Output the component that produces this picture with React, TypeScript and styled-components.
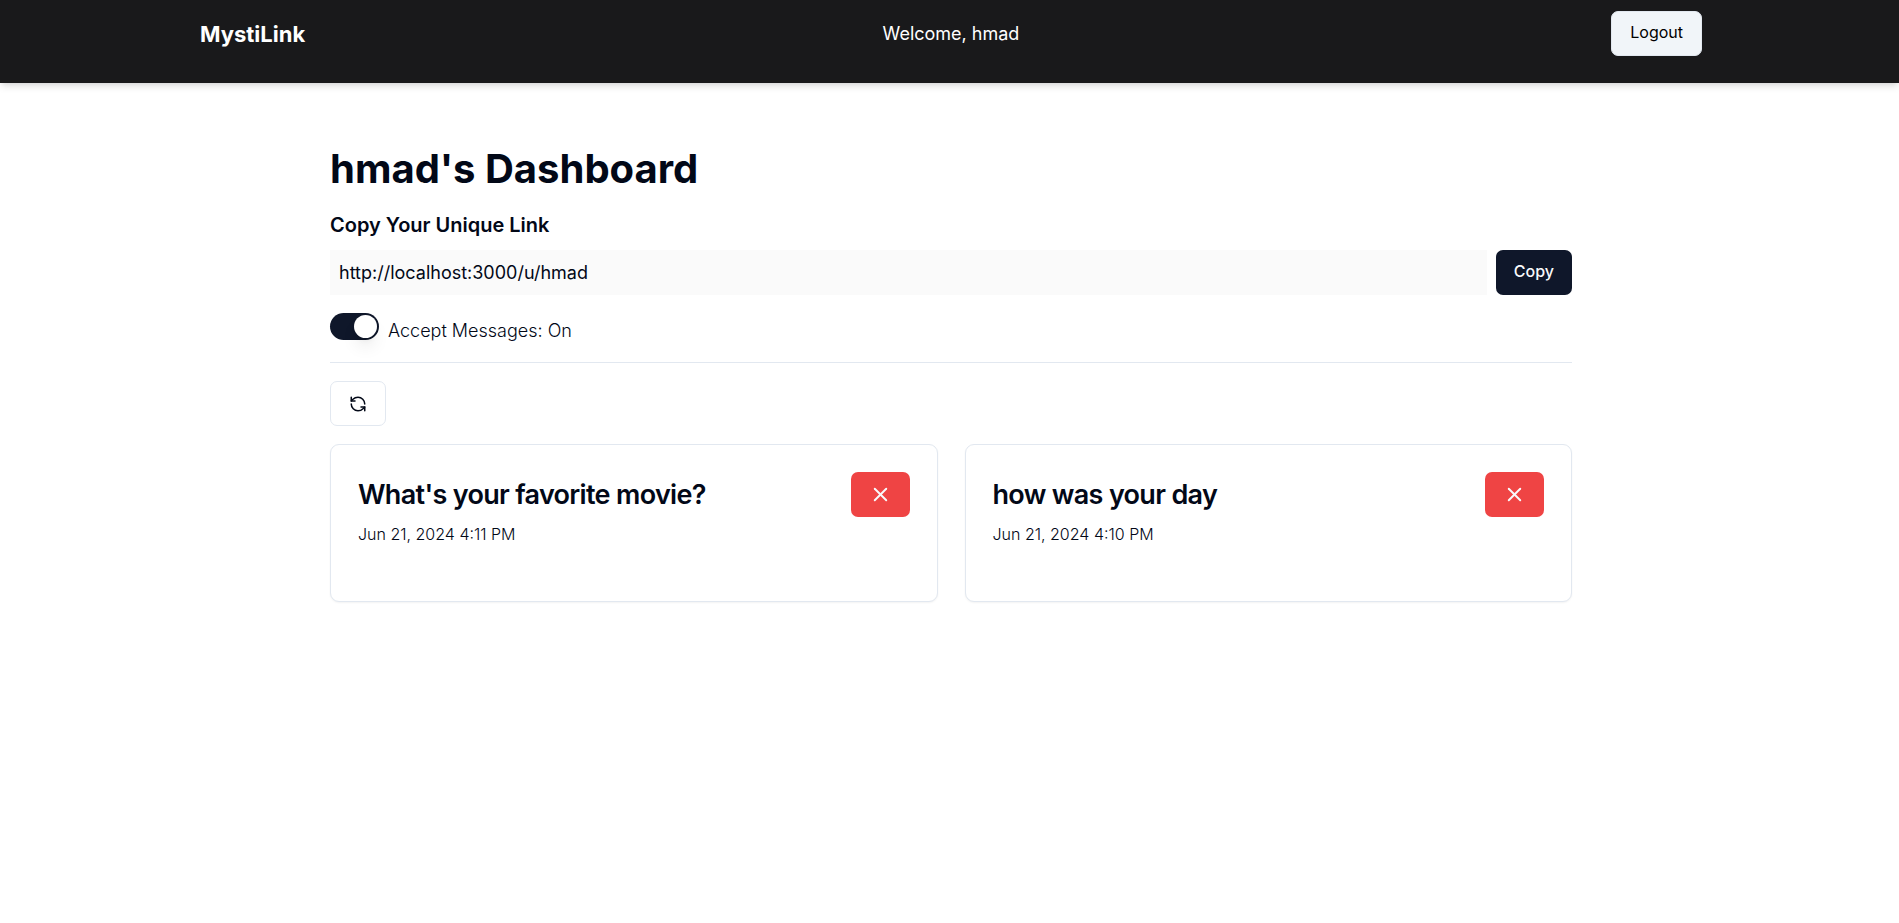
import React, { useState } from 'react';
import styled, { createGlobalStyle } from 'styled-components';
import { RefreshCcw, X } from 'lucide-react';

const GlobalStyle = createGlobalStyle`
  *, *::before, *::after { box-sizing: border-box; }
  body {
    margin: 0;
    background: #fff;
    color: #020817;
    font-family: Inter, "Liberation Sans", sans-serif;
    font-size: 18px;
    line-height: 27px;
  }
  h1, h2, h3, p { margin: 0; }
`;

const Container = styled.div<{ $max: number }>`
  max-width: ${({ $max }) => $max}px;
  margin: 0 auto;
  padding: 0 24px 0 27px;
`;

const Header = styled.header`
  background: #19191b;
  color: #fff;
  padding: 11px 0 27px;
  box-shadow: 0 5px 7px -1px rgba(0, 0, 0, 0.1), 0 2px 5px -2px rgba(0, 0, 0, 0.1);
`;

const Nav = styled.nav`
  display: grid;
  grid-template-columns: 1fr auto 1fr;
  align-items: center;
`;

const Brand = styled.a`
  justify-self: start;
  color: inherit;
  text-decoration: none;
  font-size: 22px;
  line-height: 28px;
  font-weight: 700;
`;

const Button = styled.button<{ $variant: 'dark' | 'light' | 'outline' | 'danger' }>`
  display: inline-flex;
  align-items: center;
  justify-content: center;
  flex-shrink: 0;
  height: 45px;
  padding: 0 18px;
  border: ${({ $variant }) =>
    ({ dark: 'none', light: '1px solid #e2e8f0', outline: '1px solid #e2e8f0', danger: 'none' })[$variant]};
  border-radius: 7px;
  font-family: inherit;
  font-size: 16px;
  line-height: 22px;
  font-weight: ${({ $variant }) => ($variant === 'light' ? 400 : 500)};
  cursor: pointer;
  color: ${({ $variant }) =>
    ({ dark: '#f8fafc', light: '#000', outline: '#020817', danger: '#f8fafc' })[$variant]};
  background: ${({ $variant }) =>
    ({ dark: '#0f172a', light: '#f1f5f9', outline: '#fff', danger: '#ef4444' })[$variant]};
`;

const TextButton = styled(Button)`
  justify-self: end;
  padding-bottom: 3px;
`;

const Main = styled.main`
  padding: 63px 0;
`;

const Title = styled.h1`
  margin-bottom: 18px;
  font-size: 40px;
  line-height: 45px;
  font-weight: 700;
`;

const Label = styled.label`
  display: block;
  margin-bottom: 9px;
  font-size: 20px;
  line-height: 32px;
  font-weight: 600;
`;

const LinkRow = styled.div`
  display: flex;
  gap: 9px;
  margin-bottom: 18px;
`;

const LinkInput = styled.input`
  flex: 1;
  min-width: 0;
  height: 45px;
  padding: 0 9px;
  border: 0;
  background: #fafafa;
  color: inherit;
  font: inherit;
`;

const SwitchRow = styled.div`
  display: flex;
  align-items: flex-start;
  gap: 9px;
  padding-bottom: 18px;
  border-bottom: 1px solid #e2e8f0;
`;

const Switch = styled.input`
  appearance: none;
  display: flex;
  width: 49px;
  height: 27px;
  margin: 0;
  padding: 2px;
  border-radius: 14px;
  background: #e2e8f0;
  cursor: pointer;

  &::before {
    content: '';
    width: 23px;
    height: 23px;
    border-radius: 50%;
    background: #fff;
    box-shadow: 0 11px 17px -3px rgba(0, 0, 0, 0.1), 0 5px 7px -4px rgba(0, 0, 0, 0.1);
  }
  &:checked {
    justify-content: flex-end;
    background: #0f172a;
  }
`;

const SwitchLabel = styled.label`
  padding-top: 4px;
  font-weight: 300;
`;

const Toolbar = styled.div`
  display: flex;
  margin: 18px 0;
`;

const Cards = styled.section`
  display: grid;
  grid-template-columns: 1fr 1fr;
  gap: 27px;
`;

const Card = styled.article`
  padding: 27px 27px 56px;
  border: 1px solid #e2e8f0;
  border-radius: 9px;
  background: #fff;
  box-shadow: 0 1px 2px rgba(0, 0, 0, 0.05);
`;

const CardHead = styled.div`
  display: flex;
  align-items: center;
  justify-content: space-between;
  margin-bottom: 6px;
`;

const CardTitle = styled.h3`
  font-size: 27px;
  line-height: 27px;
  font-weight: 600;
  letter-spacing: -0.025em;
`;

const CardDate = styled.p`
  font-size: 16px;
  line-height: 22px;
  font-weight: 300;
`;

const messages = [
  { text: "What's your favorite movie?", date: 'Jun 21, 2024 4:11 PM' },
  { text: 'how was your day', date: 'Jun 21, 2024 4:10 PM' },
];

export default function App() {
  const [accepting, setAccepting] = useState(true);

  return (
    <>
      <GlobalStyle />
      <Header>
        <Container $max={1553}>
          <Nav>
            <Brand href="#">MystiLink</Brand>
            <span>Welcome, hmad</span>
            <TextButton $variant="light">Logout</TextButton>
          </Nav>
        </Container>
      </Header>
      <Main>
        <Container $max={1293}>
          <Title>hmad's Dashboard</Title>
          <Label htmlFor="link">Copy Your Unique Link</Label>
          <LinkRow>
            <LinkInput id="link" type="text" readOnly value="http://localhost:3000/u/hmad" />
            <TextButton $variant="dark">Copy</TextButton>
          </LinkRow>
          <SwitchRow>
            <Switch
              id="accept"
              type="checkbox"
              role="switch"
              checked={accepting}
              onChange={(e) => setAccepting(e.target.checked)}
            />
            <SwitchLabel htmlFor="accept">Accept Messages: {accepting ? 'On' : 'Off'}</SwitchLabel>
          </SwitchRow>
          <Toolbar>
            <Button $variant="outline" aria-label="Refresh messages">
              <RefreshCcw size={18} />
            </Button>
          </Toolbar>
          <Cards>
            {messages.map((m) => (
              <Card key={m.date}>
                <CardHead>
                  <CardTitle>{m.text}</CardTitle>
                  <Button $variant="danger" aria-label="Delete message">
                    <X size={23} strokeWidth={2} />
                  </Button>
                </CardHead>
                <CardDate>{m.date}</CardDate>
              </Card>
            ))}
          </Cards>
        </Container>
      </Main>
    </>
  );
}
